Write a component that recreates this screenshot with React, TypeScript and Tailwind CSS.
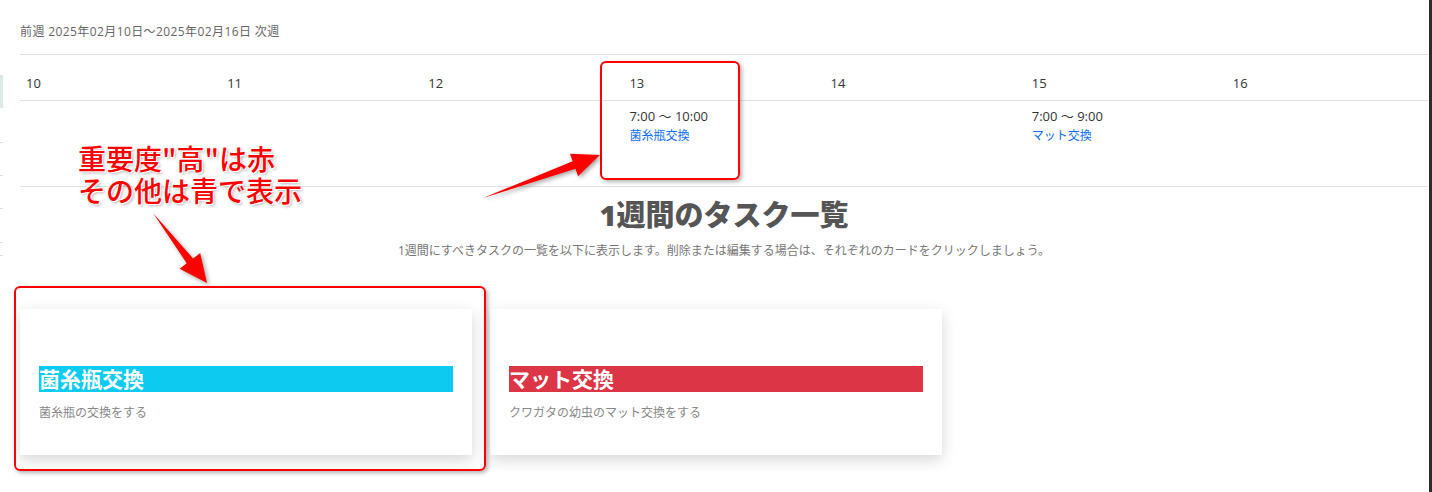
import React from "react";

const DAYS = [
  { day: "10" },
  { day: "11" },
  { day: "12" },
  { day: "13", time: "7:00 ～ 10:00", task: "菌糸瓶交換" },
  { day: "14" },
  { day: "15", time: "7:00 ～ 9:00", task: "マット交換" },
  { day: "16" },
];

const TASKS = [
  { title: "菌糸瓶交換", desc: "菌糸瓶の交換をする", high: false },
  { title: "マット交換", desc: "クワガタの幼虫のマット交換をする", high: true },
];

const FONT = "font-['Open_Sans','Noto_Sans_CJK_JP',sans-serif]";

export default function App() {
  return (
    <div className={`relative flex min-h-[492px] w-[1432px] overflow-hidden bg-white ${FONT}`}>
      <SideEdge />

      <main className="flex-1 pl-[17px] pr-[1px]">
        <div className="border-b border-[#dee2e6] pt-[23px] pb-[13px] text-[12px] leading-[18px] tracking-[0.4px] text-[#666]">
          前週 2025年02月10日～2025年02月16日 次週
        </div>

        <div className="grid grid-cols-7 border-b border-[#dee2e6]">
          {DAYS.map((d) => (
            <div key={d.day} className="px-[6px] pt-[19px] pb-[8px] text-[13px] leading-[18px] text-[#333]">
              {d.day}
            </div>
          ))}
        </div>

        <div className="grid h-[86px] grid-cols-7 border-b border-[#dee2e6]">
          {DAYS.map((d) => (
            <div key={d.day} className="px-[6px] pt-[5px]">
              {d.time ? (
                <>
                  <p className="text-[13px] leading-[20px] text-[#333]">{d.time}</p>
                  <a className="block text-[12px] leading-[20px] text-[#0d6efd]">{d.task}</a>
                </>
              ) : null}
            </div>
          ))}
        </div>

        <section className="mt-[9px] text-center">
          <h1 className="text-[29px] font-black leading-[38px] text-[#555]">1週間のタスク一覧</h1>
          <p className="mt-[8px] text-[12px] leading-[18px] text-[#777]">
            1週間にすべきタスクの一覧を以下に表示します。削除または編集する場合は、それぞれのカードをクリックしましょう。
          </p>
        </section>

        <div className="mt-[49px] flex gap-[18px]">
          {TASKS.map((t) => (
            <div
              key={t.title}
              className="w-[452px] bg-white px-[19px] pt-[57px] pb-[33px] shadow-[0_5px_14px_rgba(0,0,0,0.16)]"
            >
              <h2
                className={`h-[26px] text-[21px] font-bold leading-[26px] text-white ${
                  t.high ? "bg-[#dc3545]" : "bg-[#0dcaf0]"
                }`}
              >
                {t.title}
              </h2>
              <p className="mt-[12px] text-[12px] leading-[18px] text-[#888]">{t.desc}</p>
            </div>
          ))}
        </div>
      </main>

      <div className="w-[3px] shrink-0 bg-[#2b2b2b]" />

      <Annotations />
    </div>
  );
}

function SideEdge() {
  return (
    <div className="flex w-[3px] shrink-0 flex-col">
      <div className="h-[75px]" />
      <div className="h-[33px] bg-[#dcebe7]" />
      <div className="mt-[34px] h-px bg-[#ddd]" />
      <div className="mt-[32px] h-px bg-[#ddd]" />
      <div className="mt-[32px] h-px bg-[#ddd]" />
      <div className="mt-[33px] h-px bg-[#ddd]" />
      <div className="mt-[12px] h-px bg-[#ddd]" />
    </div>
  );
}

function Annotations() {
  return (
    <>
      <div className="pointer-events-none absolute left-[600px] top-[61px] h-[119px] w-[140px] rounded-[6px] border-2 border-[#ff0000] shadow-[2px_2px_4px_rgba(0,0,0,0.3)]" />
      <div className="pointer-events-none absolute left-[14px] top-[286px] h-[185px] w-[472px] rounded-[6px] border-2 border-[#ff0000] shadow-[2px_2px_4px_rgba(0,0,0,0.3)]" />

      <div className="pointer-events-none absolute left-[78px] top-[142px] font-['Noto_Sans_CJK_JP',sans-serif] text-[28px] font-medium leading-[32px] text-[#ff0000] [text-shadow:1px_1px_0_#fff,-1px_-1px_0_#fff,2px_2px_3px_rgba(0,0,0,0.3)]">
        <p>重要度"高"は赤</p>
        <p>その他は青で表示</p>
      </div>

      <svg
        className="pointer-events-none absolute left-0 top-0 drop-shadow-[2px_2px_2px_rgba(0,0,0,0.35)]"
        width="1432"
        height="492"
        viewBox="0 0 1432 492"
      >
        <polygon
          fill="#ff0000"
          points="483,198 572.6,161.2 570,153.7 600,155 578.1,176.3 575.4,168.8"
        />
        <polygon
          fill="#ff0000"
          points="153,213 193.1,258.4 200.2,252.9 207,283 179.6,268.7 186.7,263.2"
        />
      </svg>
    </>
  );
}
